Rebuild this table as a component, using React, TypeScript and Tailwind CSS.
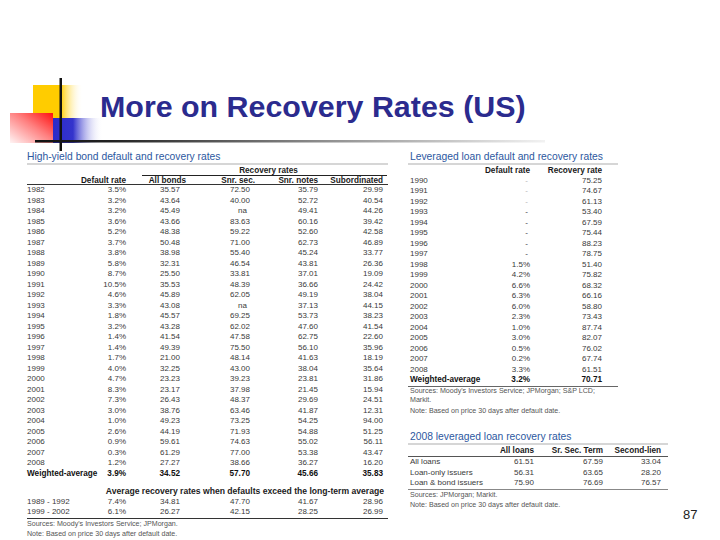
import React from "react"

type Row6 = [string, string, string, string, string, string]

const bonds: Row6[] = [
  ["1982", "3.5%", "35.57", "72.50", "35.79", "29.99"],
  ["1983", "3.2%", "43.64", "40.00", "52.72", "40.54"],
  ["1984", "3.2%", "45.49", "na", "49.41", "44.26"],
  ["1985", "3.6%", "43.66", "83.63", "60.16", "39.42"],
  ["1986", "5.2%", "48.38", "59.22", "52.60", "42.58"],
  ["1987", "3.7%", "50.48", "71.00", "62.73", "46.89"],
  ["1988", "3.8%", "38.98", "55.40", "45.24", "33.77"],
  ["1989", "5.8%", "32.31", "46.54", "43.81", "26.36"],
  ["1990", "8.7%", "25.50", "33.81", "37.01", "19.09"],
  ["1991", "10.5%", "35.53", "48.39", "36.66", "24.42"],
  ["1992", "4.6%", "45.89", "62.05", "49.19", "38.04"],
  ["1993", "3.3%", "43.08", "na", "37.13", "44.15"],
  ["1994", "1.8%", "45.57", "69.25", "53.73", "38.23"],
  ["1995", "3.2%", "43.28", "62.02", "47.60", "41.54"],
  ["1996", "1.4%", "41.54", "47.58", "62.75", "22.60"],
  ["1997", "1.4%", "49.39", "75.50", "56.10", "35.96"],
  ["1998", "1.7%", "21.00", "48.14", "41.63", "18.19"],
  ["1999", "4.0%", "32.25", "43.00", "38.04", "35.64"],
  ["2000", "4.7%", "23.23", "39.23", "23.81", "31.86"],
  ["2001", "8.3%", "23.17", "37.98", "21.45", "15.94"],
  ["2002", "7.3%", "26.43", "48.37", "29.69", "24.51"],
  ["2003", "3.0%", "38.76", "63.46", "41.87", "12.31"],
  ["2004", "1.0%", "49.23", "73.25", "54.25", "94.00"],
  ["2005", "2.6%", "44.19", "71.93", "54.88", "51.25"],
  ["2006", "0.9%", "59.61", "74.63", "55.02", "56.11"],
  ["2007", "0.3%", "61.29", "77.00", "53.38", "43.47"],
  ["2008", "1.2%", "27.27", "38.66", "36.27", "16.20"],
]

const episodes: Row6[] = [
  ["1989 - 1992", "7.4%", "34.81", "47.70", "41.67", "28.96"],
  ["1999 - 2002", "6.1%", "26.27", "42.15", "28.25", "26.99"],
]

const loans: [string, string, string][] = [
  ["1990", "-", "75.25"],
  ["1991", "-", "74.67"],
  ["1992", "-", "61.13"],
  ["1993", "-", "53.40"],
  ["1994", "-", "67.59"],
  ["1995", "-", "75.44"],
  ["1996", "-", "88.23"],
  ["1997", "-", "78.75"],
  ["1998", "1.5%", "51.40"],
  ["1999", "4.2%", "75.82"],
  ["2000", "6.6%", "68.32"],
  ["2001", "6.3%", "66.16"],
  ["2002", "6.0%", "58.80"],
  ["2003", "2.3%", "73.43"],
  ["2004", "1.0%", "87.74"],
  ["2005", "3.0%", "82.07"],
  ["2006", "0.5%", "76.02"],
  ["2007", "0.2%", "67.74"],
  ["2008", "3.3%", "61.51"],
]

const recovery2008: [string, string, string, string][] = [
  ["All loans", "61.51", "67.59", "33.04"],
  ["Loan-only issuers", "56.31", "63.65", "28.20"],
  ["Loan & bond issuers", "75.90", "76.69", "76.57"],
]

const bondCols = "grid grid-cols-[45px_54px_60px_69px_63px_69px]"

function BondRow({ r, bold }: { r: Row6; bold?: boolean }) {
  return (
    <div className={`${bondCols} h-[10.5px] leading-[10.5px] ${bold ? "font-bold text-[#111] text-[8.2px]" : ""}`}>
      <div className="whitespace-nowrap">{r[0]}</div>
      <div className="text-right">{r[1]}</div>
      <div className="text-right pr-[6px]">{r[2]}</div>
      <div className={`text-right ${r[3] === "na" ? "pr-[8px]" : "pr-[5px]"}`}>{r[3]}</div>
      <div className="text-right">{r[4]}</div>
      <div className="text-right pr-[4px]">{r[5]}</div>
    </div>
  )
}

// slide decoration: squares + crossing rules
function Decoration() {
  return (
    <svg width="560" height="152" className="col-start-1 row-start-1">
      <defs>
        <linearGradient id="yel" x1="0" y1="0" x2="1" y2="0">
          <stop offset="0" stopColor="#ffcc00" />
          <stop offset="0.55" stopColor="#ffcc00" />
          <stop offset="1" stopColor="#ffffff" stopOpacity="0" />
        </linearGradient>
        <linearGradient id="red" x1="1" y1="0" x2="0" y2="1">
          <stop offset="0" stopColor="#ff1010" />
          <stop offset="0.45" stopColor="#ff8080" />
          <stop offset="1" stopColor="#fff4f4" />
        </linearGradient>
        <linearGradient id="blu" x1="0" y1="0" x2="1" y2="0">
          <stop offset="0" stopColor="#2b2bc8" />
          <stop offset="0.4" stopColor="#3434cc" />
          <stop offset="1" stopColor="#ffffff" stopOpacity="0" />
        </linearGradient>
        <linearGradient id="rule" x1="0" y1="0" x2="1" y2="0">
          <stop offset="0" stopColor="#111111" />
          <stop offset="0.15" stopColor="#222222" />
          <stop offset="0.55" stopColor="#8a8a8a" />
          <stop offset="1" stopColor="#f2f2f2" />
        </linearGradient>
      </defs>
      <rect x="33" y="85" width="50" height="33" fill="url(#yel)" />
      <rect x="10" y="113" width="43" height="30" fill="url(#red)" />
      <rect x="53" y="118" width="50" height="25" fill="url(#blu)" />
      <rect x="59.5" y="78" width="2.5" height="73" fill="#111" />
      <rect x="35" y="140" width="510" height="2.5" fill="url(#rule)" />
    </svg>
  )
}

export default function App() {
  return (
    <div className="w-[720px] h-[540px] bg-white overflow-hidden font-['Liberation_Sans',Arial,sans-serif] text-[#3a3a3a]">
      {/* title band */}
      <div className="grid h-[150px]">
        <Decoration />
        <h1 className="col-start-1 row-start-1 pl-[100px] pt-[89px] text-[30.4px] leading-[34px] font-bold text-[#2b2b8e]">
          More on Recovery Rates (US)
        </h1>
      </div>

      <div className="flex h-[390px]">
        {/* high-yield bonds */}
        <div className="ml-[27px] w-[361px] text-[8px]">
          <div className="h-[13px] leading-[13px] text-[10.3px] text-[#2c57a0] whitespace-nowrap">
            High-yield bond default and recovery rates
          </div>
          <div className="h-[2px] bg-[#d6d6d6]" />
          <div className="ml-[115px] w-[245px] h-[11px] leading-[11px] text-center pl-[8px] text-[8.2px] font-bold text-[#222] border-b border-[#222]">
            Recovery rates
          </div>
          <div className={`${bondCols} h-[8px] leading-[9px] text-[8.2px] font-bold text-[#1a1a1a]`}>
            <div />
            <div className="text-right whitespace-nowrap">Default rate</div>
            <div className="text-right whitespace-nowrap">All bonds</div>
            <div className="text-right whitespace-nowrap">Snr. sec.</div>
            <div className="text-right whitespace-nowrap">Snr. notes</div>
            <div className="text-right whitespace-nowrap pr-[4px]">Subordinated</div>
          </div>
          <div className="h-px bg-[#333]" />
          {bonds.map((r) => (
            <BondRow key={r[0]} r={r} />
          ))}
          <BondRow r={["Weighted-average", "3.9%", "34.52", "57.70", "45.66", "35.83"]} bold />
          <div className="mt-[7px] ml-[60px] h-[10.5px] leading-[10.5px] text-right pr-[4px] text-[8.6px] font-bold text-[#222] whitespace-nowrap">
            Average recovery rates when defaults exceed the long-term average
          </div>
          {episodes.map((r) => (
            <BondRow key={r[0]} r={r} />
          ))}
          <div className="h-px bg-[#333]" />
          <div className="text-[7.1px] leading-[10px] text-[#555] whitespace-nowrap">
            <div>Sources: Moody's Investors Service; JPMorgan.</div>
            <div>Note: Based on price 30 days after default date.</div>
          </div>
        </div>

        {/* leveraged loans */}
        <div className="ml-[20px] w-[262px] text-[8px]">
          <div className="w-[210px]">
            <div className="pl-[2px] h-[13px] leading-[13px] text-[10.3px] text-[#2c57a0] whitespace-nowrap">
              Leveraged loan default and recovery rates
            </div>
            <div className="h-[2px] bg-[#d6d6d6]" />
            <div className="pl-[2px] grid grid-cols-[70px_50px_72px] h-[10.5px] leading-[11px] text-[8.2px] font-bold text-[#1a1a1a]">
              <div />
              <div className="text-right whitespace-nowrap">Default rate</div>
              <div className="text-right whitespace-nowrap">Recovery rate</div>
            </div>
            {loans.map(([y, d, r], i) => (
              <div key={y} className="pl-[2px] grid grid-cols-[70px_50px_72px] h-[10.5px] leading-[10.5px]">
                <div>{y}</div>
                <div className={`text-right ${d === "-" ? "pr-[2px]" : ""} ${i < 3 ? "text-[#b5b5b5]" : ""}`}>{d}</div>
                <div className="text-right">{r}</div>
              </div>
            ))}
            <div className="pl-[2px] grid grid-cols-[70px_50px_72px] h-[10.5px] leading-[10.5px] text-[8.2px] font-bold text-[#111]">
              <div className="whitespace-nowrap">Weighted-average</div>
              <div className="text-right">3.2%</div>
              <div className="text-right">70.71</div>
            </div>
            <div className="h-px bg-[#666]" />
            <div className="pl-[2px] text-[7.1px] leading-[9.5px] text-[#555]">
              <div className="whitespace-nowrap">Sources: Moody's Investors Service; JPMorgan; S&amp;P LCD;</div>
              <div>Markit.</div>
              <div className="mt-px whitespace-nowrap">Note: Based on price 30 days after default date.</div>
            </div>
          </div>

          <div className="mt-[14px] w-[260px]">
            <div className="pl-[2px] h-[13px] leading-[13px] text-[10.3px] text-[#2c57a0] whitespace-nowrap">
              2008 leveraged loan recovery rates
            </div>
            <div className="h-[2px] bg-[#d6d6d6]" />
            <div className="mt-px pl-[2px] grid grid-cols-[88px_36px_69px_58px] h-[10px] leading-[10px] text-[8.2px] font-bold text-[#1a1a1a]">
              <div />
              <div className="text-right whitespace-nowrap">All loans</div>
              <div className="text-right whitespace-nowrap">Sr. Sec. Term</div>
              <div className="text-right whitespace-nowrap">Second-lien</div>
            </div>
            <div className="h-px bg-[#555]" />
            {recovery2008.map((r) => (
              <div key={r[0]} className="pl-[2px] grid grid-cols-[88px_36px_69px_58px] h-[10.5px] leading-[10.5px]">
                <div className="whitespace-nowrap">{r[0]}</div>
                <div className="text-right">{r[1]}</div>
                <div className="text-right">{r[2]}</div>
                <div className="text-right">{r[3]}</div>
              </div>
            ))}
            <div className="h-px bg-[#888]" />
            <div className="pl-[2px] text-[7.1px] leading-[10px] text-[#555] whitespace-nowrap">
              <div>Sources: JPMorgan; Markit.</div>
              <div>Note: Based on price 30 days after default date.</div>
            </div>
          </div>
        </div>

        {/* slide number */}
        <div className="flex-1 flex flex-col justify-end pb-[17px] pl-[13px]">
          <div className="text-[13px] leading-[16px] text-[#222]">87</div>
        </div>
      </div>
    </div>
  )
}
